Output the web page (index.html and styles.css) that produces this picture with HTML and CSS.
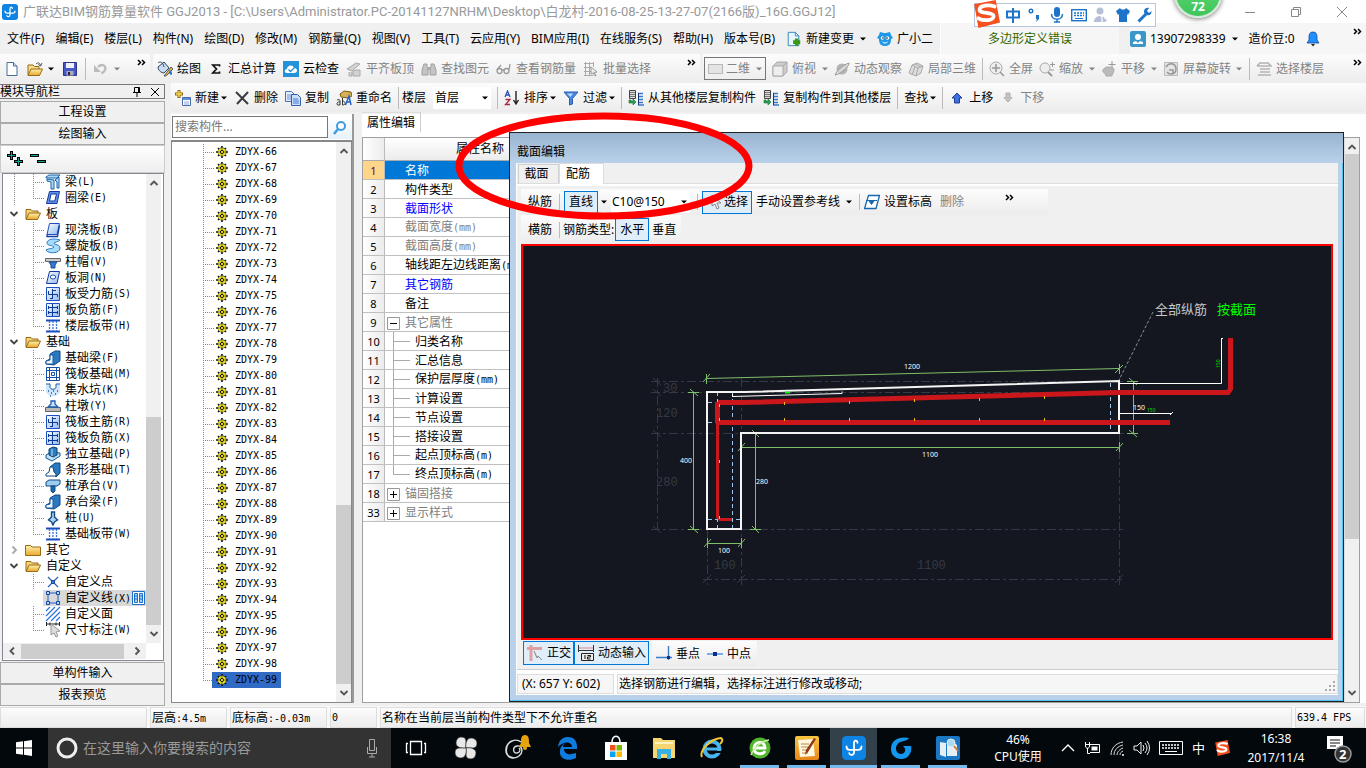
FILE: index.html
```html
<!DOCTYPE html>
<html lang="zh-CN">
<head>
<meta charset="utf-8">
<title>广联达BIM钢筋算量软件 GGJ2013</title>
<link rel="stylesheet" href="styles.css">
</head>
<body>
<svg class="defs" aria-hidden="true">
  <defs>
    <linearGradient id="gy" x1="0" y1="0" x2="0" y2="1"><stop offset="0" stop-color="#fff0b0"/><stop offset="1" stop-color="#e8a92c"/></linearGradient>
    <linearGradient id="gb" x1="0" y1="0" x2="1" y2="1"><stop offset="0" stop-color="#ffffff"/><stop offset="1" stop-color="#8fb8f0"/></linearGradient>
    <linearGradient id="go" x1="0" y1="0" x2="0" y2="1"><stop offset="0" stop-color="#f7c640"/><stop offset="1" stop-color="#e8851a"/></linearGradient>
    <symbol id="gear" viewBox="0 0 12 12"><path d="M6 0v12M0 6h12M2 2l8 8M10 2l-8 8" stroke="#111" stroke-width="1.600"/><circle cx="6" cy="6" r="4.300" fill="#e8e020" stroke="#222" stroke-width=".8" stroke-dasharray="2 1"/><path d="M6 2v8M2 6h8" stroke="#444" stroke-width=".6"/><circle cx="6" cy="6" r="1.600" fill="#fff200" stroke="#111"/></symbol>
    <symbol id="caret" viewBox="0 0 6 4"><path d="M0 .5h6L3 3.500z" fill="currentColor"/></symbol>
    <symbol id="more" viewBox="0 0 9 7"><path d="M1 1l2.500 2.500L1 6M5 1l2.500 2.500L5 6" fill="none" stroke="#000" stroke-width="1.500"/></symbol>
    <symbol id="chevd" viewBox="0 0 10 10"><path d="M1.500 3L5 6.500 8.500 3" fill="none" stroke="currentColor" stroke-width="1.900"/></symbol>
    <symbol id="chevu" viewBox="0 0 10 10"><path d="M1.500 7L5 3.500 8.500 7" fill="none" stroke="currentColor" stroke-width="1.900"/></symbol>
    <symbol id="chevl" viewBox="0 0 10 10"><path d="M7 1.500L3.500 5 7 8.500" fill="none" stroke="currentColor" stroke-width="1.900"/></symbol>
    <symbol id="chevr" viewBox="0 0 10 10"><path d="M3.500 1.500L7 5 3.500 8.500" fill="none" stroke="currentColor" stroke-width="1.900"/></symbol>
    <symbol id="ggj" viewBox="0 0 16 16"><rect width="16" height="16" rx="3" fill="#0d84e3"/><path d="M10.300 4.500c0-2-2.300-1.800-2.300.3V11c0 2-3 2-3.200.5M3 7c0 1.700.8 2.200 2 2.200h6c1.200 0 2-.5 2-2.200" fill="none" stroke="#fff" stroke-width="1.200" stroke-linecap="round"/></symbol>
    <symbol id="sogou" viewBox="0 0 26 26"><path d="M2 4L22 0l4 21-20 5z" fill="#f4511e"/><path d="M21 6c-5-2-14-1-14 3s13 2 13 6-9 5-14 2" fill="none" stroke="#fff" stroke-width="3.500" stroke-linecap="round"/></symbol>
    <symbol id="folder-open" viewBox="0 0 16 12"><path d="M1 11V1.500h5L7.500 3H13v2" fill="#f1d37c" stroke="#9a6a10"/><path d="M1 11.500L4 5h11.500l-3 6.500z" fill="url(#gy)" stroke="#9a6a10"/></symbol>
    <symbol id="folder" viewBox="0 0 16 12"><path d="M.5 11.500v-10h5L7 3h8.500v8.500z" fill="url(#gy)" stroke="#9a6a10"/></symbol>
    <symbol id="slab" viewBox="0 0 16 16"><path d="M4.500 1.500h10l-2.500 11H2z" fill="url(#gb)" stroke="#1c4fc0"/><path d="M2 12.500v2h10.500l2-11" fill="none" stroke="#1238a0" stroke-width="1.300"/></symbol>
    <symbol id="ringbeam" viewBox="0 0 16 16"><path d="M4.500 1.500h10l-2.500 12H1.500z" fill="#5f92e8" stroke="#1238a0"/><path d="M6 4h5.500L9.800 11H4.500z" fill="#fff" stroke="#1238a0"/></symbol>
    <symbol id="beam" viewBox="0 0 16 16"><path d="M1 3l3-2h11l-3 3H1zM2 5l7 1v9H6V8L2 7zM10 6l4-3v11h-2V8z" fill="#a9d8f5" stroke="#1f62a8"/></symbol>
    <symbol id="spiral" viewBox="0 0 16 16"><path d="M15 2C9 0 2 1 2 5c0 3 6 2 7 4-1 2-5 1-8 3 2 4 14 4 14-2 0-4-6-3-6-5 1-1 4-1 6-3z" fill="#a6dcfa" stroke="#2b7cc2"/></symbol>
    <symbol id="cap" viewBox="0 0 16 16"><path d="M.5 4.500h15v3H.5z" fill="#ccc" stroke="#666"/><path d="M4 8h8l-2 3v3H6v-3z" fill="#357bd0" stroke="#1a4a98"/></symbol>
    <symbol id="hole" viewBox="0 0 16 16"><path d="M4.500 1.500h10l-2.500 12H1.500z" fill="url(#gb)" stroke="#1238a0"/><ellipse cx="8" cy="7" rx="2.700" ry="2" fill="#fff" stroke="#1c4fc0"/></symbol>
    <symbol id="rebar-a" viewBox="0 0 16 16"><path d="M1.500 1.500h13v13h-13z" fill="url(#gb)" stroke="#1c4fc0"/><path d="M7.500 3v10M3.500 5v3.500h9V11M5 12.500h3M8 4.500h3" fill="none" stroke="#0d389a"/></symbol>
    <symbol id="rebar-b" viewBox="0 0 16 16"><path d="M1.500 1.500h13v13h-13z" fill="url(#gb)" stroke="#1c4fc0"/><path d="M7.500 2v12M3 5.500h10M3 10.500h10M3.500 4v3M12.500 4v3M3.500 9v3M12.500 9v3" stroke="#0d389a"/></symbol>
    <symbol id="band" viewBox="0 0 16 16"><path d="M1 2.500h14M1 13.500h14" stroke="#1c4fc0" stroke-width="2"/><path d="M8 3v10M4.500 3v10M11.500 3v10" stroke="#3a78d8" stroke-width="1.300" stroke-dasharray="2 1"/></symbol>
    <symbol id="fbeam" viewBox="0 0 16 16"><path d="M1 14V11l4-2V4l5-3h5v10l-6 4z" fill="#2a78c2" stroke="#124a80"/><path d="M1 14v-3l4-1V5h3v9z" fill="#eaf5ff" stroke="#1a5aa0"/></symbol>
    <symbol id="raft" viewBox="0 0 16 16"><path d="M1.500 1.500h13v13h-13zM4.500 1v14M11.500 1v14M1 4.500h14M1 11.500h14M6.500 6.500h3v3h-3z" fill="#fff" fill-opacity=".2" stroke="#1750a8"/></symbol>
    <symbol id="pit" viewBox="0 0 16 16"><path d="M1 2h4v3c0 3 6 3 6 0V2h4v6c0 8-14 8-14 0z" fill="#cfe5fb"/><path d="M1 2h4v3c0 3 6 3 6 0V2h4" fill="none" stroke="#1c5fb0"/><path d="M3 9h1M6 11h1M10 12h1M12 9h1M8 9h1M5 14h1" stroke="#1c5fb0" stroke-width="1.400"/></symbol>
    <symbol id="pier" viewBox="0 0 16 16"><path d="M.5 9.500h15v4H.5z" fill="#bbb" stroke="#666"/><path d="M3 9l3-3V3h4v3l3 3z" fill="#cfe1fb" stroke="#1c5fb0" stroke-width="1.300"/></symbol>
    <symbol id="isolated" viewBox="0 0 16 16"><path d="M1 9l5-3 9 1v3l-8 5-6-3z" fill="#bfe0f8" stroke="#15558c"/><path d="M4 3l4-2 4 1v7l-4 2-4-2z" fill="#2d7cbe" stroke="#0d4474"/><path d="M7 3v7" stroke="#bfe0f8"/></symbol>
    <symbol id="strip" viewBox="0 0 16 16"><path d="M5 5l5-4h5v10l-4 4z" fill="#2a78c2" stroke="#124a80"/><path d="M1 14v-2l3-2 1-5h3l1 5 2 2v2z" fill="#fff" stroke="#124a80"/></symbol>
    <symbol id="pilecap" viewBox="0 0 16 16"><path d="M1 4l3-2h11v4l-3 2H1z" fill="#9bcdf2" stroke="#124a80"/><path d="M6 8h4v5l-2 2-2-2z" fill="#176bb5" stroke="#124a80"/></symbol>
    <symbol id="pile" viewBox="0 0 16 16"><path d="M6.500 2h3v5l3 3-3 2L8 15l-1.500-3-3-2 3-3z" fill="#a8d2f5" stroke="#124a80" stroke-width="1.400"/></symbol>
    <symbol id="cpoint" viewBox="0 0 16 16"><path d="M3 3l10 10M13 3L3 13" stroke="#2463ba" stroke-width="1.200"/><path d="M6.500 6.500h3v3h-3z" fill="#3b80dd" stroke="#1a4a98"/></symbol>
    <symbol id="cline" viewBox="0 0 16 16"><path d="M3 3h10v10H3z" fill="none" stroke="#1c5fd0"/><path d="M1.500 1.500h3v3h-3zM11.500 1.500h3v3h-3zM1.500 11.500h3v3h-3zM11.500 11.500h3v3h-3z" fill="#bcd8fa" stroke="#1246a0"/></symbol>
    <symbol id="cface" viewBox="0 0 16 16"><path d="M1 5l4-4M1 10l9-9M1 15L15 1M6 15l9-9M11 15l4-4" stroke="#2d73dc" stroke-width="1.200"/></symbol>
    <symbol id="dim" viewBox="0 0 16 16"><path d="M1.500 0v4M14.500 0v4M2 2h12M5 .5v3M11 .5v3" stroke="#222"/><path d="M6 2l9 7-4 1 2 4-2 1-2-4-3 2z" fill="#ddd" stroke="#999"/></symbol>
    <symbol id="i-new" viewBox="0 0 16 16"><path d="M3 1.500h6.500l3.500 3.500v9.500H3z" fill="#fff" stroke="#4a6a9a"/><path d="M9.500 1.500V5H13" fill="#cfe0f5" stroke="#4a6a9a"/></symbol>
    <symbol id="i-open" viewBox="0 0 16 16"><path d="M1 14V4h5l1.500 1.500H12V8" fill="#f6dc8e" stroke="#9a6a10"/><path d="M1 14.500L4 8h11.500l-3 6.500z" fill="url(#gy)" stroke="#9a6a10"/><path d="M9 3c2-2 4-1 4.500 1.500M15 2l-1.300 3-2.400-1.500" fill="none" stroke="#456"/></symbol>
    <symbol id="i-save" viewBox="0 0 16 16"><path d="M1.500 1.500h13v13h-13z" fill="#4757c8" stroke="#2c3488"/><path d="M4 2h8v5H4z" fill="#eef2ff"/><path d="M4.500 10h7v4.500h-7z" fill="#aab"/><path d="M6 11h2v3H6z" fill="#223"/></symbol>
    <symbol id="i-undo" viewBox="0 0 16 16"><path d="M5 6c4-4 9-1 7 3-.7 1.500-2 2.500-3.500 3.500" fill="none" stroke="#bbb" stroke-width="2.400"/><path d="M1 4v7h7z" fill="#bbb"/></symbol>
    <symbol id="i-paint" viewBox="0 0 16 16"><path d="M1 6l6-5 5 6-5 5c-3 0-6-3-6-6z" fill="#c9dcf5" stroke="#345"/><path d="M1 2c2-2 5-1 6 4" fill="none" stroke="#345"/><path d="M7 15l7-9 2 2-7 7z" fill="#e7b63c" stroke="#345" stroke-width=".8"/><path d="M13 9c3 2 2 5 1 5s-3-3-1-5z" fill="#2a6fd8"/></symbol>
    <symbol id="i-sigma" viewBox="0 0 16 16"><path d="M11.500 5.500V4H4.800L8.500 8l-3.700 4h6.700v-1.500" fill="none" stroke="#111" stroke-width="1.700"/></symbol>
    <symbol id="i-cloud" viewBox="0 0 16 16"><rect width="16" height="16" fill="#2492d8"/><path d="M4 12c-3 0-3-4 0-4 0-4 6-5 7-1 4 0 4 5 0 5z" fill="#fff"/><path d="M5.500 8.500L7.500 10.500 13 5" fill="none" stroke="#2492d8" stroke-width="1.300"/></symbol>
    <symbol id="i-align" viewBox="0 0 16 16"><path d="M1 8l9-6 4 1-8 7zM3 11v4h3v-4M7 10v5h7V9h-4z" fill="#d2d2d2" stroke="#aaa"/></symbol>
    <symbol id="i-bino" viewBox="0 0 16 16"><path d="M3 3h3v3l1 1v7H1V9zM10 3h3l2 6v5H9V7l1-1z" fill="#c4c4c4" stroke="#a0a0a0"/><path d="M6.500 6h3v3h-3z" fill="#aaa"/></symbol>
    <symbol id="i-glass" viewBox="0 0 16 16"><circle cx="3.500" cy="10" r="2.500" fill="none" stroke="#999" stroke-width="1.300"/><circle cx="10.500" cy="10" r="2.500" fill="none" stroke="#999" stroke-width="1.300"/><path d="M6 9h2M1 9l4-5M13 9l1-6" stroke="#999" stroke-width="1.300" fill="none"/></symbol>
    <symbol id="i-grid" viewBox="0 0 16 16"><path d="M1 2.500h10M1 6.500h8M1 10.500h7M1 14.500h9M2.500 1v14M6.500 1v14M10.500 1v5" stroke="#aaa"/><path d="M8 6l6 5-3 .5 2 3-1 .5-2-3-2 1z" fill="#eee" stroke="#999"/></symbol>
    <symbol id="i-rect" viewBox="0 0 16 16"><rect x=".5" y="3.500" width="14" height="9" fill="#e3e3e3" stroke="#b8b8b8"/></symbol>
    <symbol id="i-cube" viewBox="0 0 16 16"><path d="M1 5l4-4h10v10l-4 4H1z" fill="#ccc" stroke="#aaa"/><path d="M1 5h10v10H1z" fill="#eee" stroke="#aaa"/><path d="M11 5l4-4" stroke="#aaa"/></symbol>
    <symbol id="i-orbit" viewBox="0 0 16 16"><circle cx="8" cy="8" r="5.500" fill="#b4b4b4"/><path d="M1 14C3 9 9 4 15 2c1 2-7 11-14 12z" fill="#ddd" fill-opacity=".8" stroke="#999"/></symbol>
    <symbol id="i-local" viewBox="0 0 16 16"><path d="M4 4l5-2 6 3-2 7-5 3-7-3z" fill="#ddd" stroke="#aaa"/><path d="M4 4l6 3 5-2M10 7l-2 8M7 5.500L4 14M7 3l6 3" fill="none" stroke="#aaa"/></symbol>
    <symbol id="i-fit" viewBox="0 0 16 16"><circle cx="7" cy="7" r="6" fill="#eee" stroke="#aaa"/><path d="M7 3v8M3 7h8M11 11l4 4" stroke="#999" stroke-width="1.600"/></symbol>
    <symbol id="i-zoom" viewBox="0 0 16 16"><circle cx="6" cy="7" r="5" fill="#eee" stroke="#aaa"/><path d="M9 11l4 4" stroke="#999" stroke-width="2"/><path d="M13.500 1v5M11 3.500h5M11 9h4" stroke="#999"/></symbol>
    <symbol id="i-pan" viewBox="0 0 16 16"><path d="M2 9c2-3 3-3 5-3s6 0 6 3-2 3-2 6H5c0-3-4-3-3-6z" fill="#bbb" stroke="#aaa"/><path d="M11 0v7M7.500 3.500h7" stroke="#999"/></symbol>
    <symbol id="i-rot" viewBox="0 0 16 16"><path d="M1.500 1.500h13v13h-13z" fill="#e5e5e5" stroke="#bbb"/><path d="M3 6c3-5 10-4 10 2s-7 6-9 3" fill="none" stroke="#999" stroke-width="1.600"/><path d="M6 9h4v3" fill="none" stroke="#999" stroke-width="1.500"/></symbol>
    <symbol id="i-floors" viewBox="0 0 16 16"><path d="M1 5l3-3h8l3 3H1M4 8h10M4 11h10M2 14h13" fill="none" stroke="#b4b4b4" stroke-width="1.700"/></symbol>
    <symbol id="i-add" viewBox="0 0 16 16"><path d="M4 0v8M0 4h8" stroke="#8a6a10" stroke-width="3"/><path d="M4 1v6M1 4h6" stroke="#ffd848" stroke-width="1.400"/><path d="M7.500 7.500h8v8h-8z" fill="#fff" stroke="#4a6aa8"/><path d="M8 8h7v2H8z" fill="#5b8fe0"/><path d="M9 12h5M9 14h5" stroke="#8aa6d8"/></symbol>
    <symbol id="i-x" viewBox="0 0 16 16"><path d="M2 2l12 12M14 2L3 14" stroke="#3c3c44" stroke-width="2"/></symbol>
    <symbol id="i-copy" viewBox="0 0 16 16"><path d="M.5 1.500h6l3 3v7h-9z" fill="#e4eefc" stroke="#4a70b8"/><path d="M2 5h5M2 7h5M2 9h5" stroke="#6a90d8"/><path d="M6.500 4.500h6l3 3v8h-9z" fill="#cadffa" stroke="#3560b0"/><path d="M8 9h5M8 11h6M8 13h6" stroke="#4a78d0"/></symbol>
    <symbol id="i-ren" viewBox="0 0 16 16"><path d="M4 4l4-3 7 1 1 4-4 2-7-1z" fill="#d8b252" stroke="#7a5a18"/><path d="M1 10c3-1 3 0 3 2v3M4 12c-3-1-4 3-2 3h2M6.500 8v7c4 0 3-4 0-4" fill="none" stroke="#333"/><path d="M9.500 15L13 6l2 9M11 12h4" fill="none" stroke="#2463c8" stroke-width="1.500"/></symbol>
    <symbol id="i-az" viewBox="0 0 16 16"><path d="M1 7l2.500-6L6 7M2 5h3" fill="none" stroke="#2d50b0" stroke-width="1.300"/><path d="M1.500 9.500H6l-4.500 5H6" fill="none" stroke="#a82a40" stroke-width="1.300"/><path d="M12 1v12M9.500 10l2.500 4 2.500-4" fill="none" stroke="#222" stroke-width="1.400"/></symbol>
    <symbol id="i-fun" viewBox="0 0 16 16"><path d="M1 2h14L9.500 8.500V14L6.500 15V8.500z" fill="#4a88e0" stroke="#2a5cae"/><path d="M4 3.500h6L7.500 7z" fill="#b8d8ff"/></symbol>
    <symbol id="i-cpfloor" viewBox="0 0 16 16"><path d="M1.500.5h6v8h-6z" fill="#ddd" stroke="#444"/><path d="M2 2.500h5M2 4.500h5M2 6.500h5" stroke="#777"/><path d="M1 10v3h4v2l3-3-3-3v2H3v-1z" fill="#27a050" stroke="#187038" stroke-width=".6"/><path d="M10 3.500h5M10 6.500h5M10 9.500h5M10 12.500h5M10 15h6" stroke="#3a78cc" stroke-width="1.600"/><path d="M10.500 3v12" stroke="#17396f"/></symbol>
    <symbol id="i-up" viewBox="0 0 16 16"><path d="M8 3l5 5h-2.500v5h-5V8H3z" fill="#3d70dc" stroke="#1c3f98"/></symbol>
    <symbol id="i-down" viewBox="0 0 16 16"><path d="M8 12l4-4.500h-2V3H6v4.500H4z" fill="#c2c2c2" stroke="#b0b0b0"/></symbol>
    <symbol id="i-doc" viewBox="0 0 16 18"><path d="M1.500 1.500h8l4 4v11h-12z" fill="#e7f5ff" stroke="#2a80b8"/><path d="M9.500 1.500v4h4" fill="none" stroke="#2a80b8"/><path d="M11 8.500v8M7 12.500h8" stroke="#3a9a18" stroke-width="4"/></symbol>
    <symbol id="i-face" viewBox="0 0 16 16"><path d="M2 4l1-3 4 1h2l4-1 1 3 2 3-2 1c0 5-2 7-6 7s-6-2-6-7L0 7z" fill="#1e98e8"/><circle cx="5.500" cy="7" r="1.800" fill="#fff"/><circle cx="10.500" cy="7" r="1.800" fill="#fff"/><circle cx="6" cy="7" r=".8"/><circle cx="10" cy="7" r=".8"/><path d="M5.500 11c2 1.500 3 1.500 5 0" stroke="#fff" fill="none"/></symbol>
    <symbol id="i-user" viewBox="0 0 16 16"><rect width="16" height="16" rx="2" fill="#3b97c8"/><circle cx="8" cy="6" r="3" fill="#fff"/><path d="M3 13v-2l3-1 2 2 2-2 3 1v2z" fill="#fff"/></symbol>
    <symbol id="i-bell" viewBox="0 0 14 16"><path d="M7 1c-3 0-4 2-4 5v3l-2 3h12l-2-3V6c0-3-1-5-4-5z" fill="#1e90ff" stroke="#174a90" stroke-width=".8"/><path d="M5 13h4l-2 2.500z" fill="#222"/></symbol>
    <symbol id="i-cursor" viewBox="0 0 16 16"><path d="M4 1v11l3-2 2 5 2-1-2-5h4z" fill="#f4f4f4" stroke="#888"/></symbol>
    <symbol id="i-elev" viewBox="0 0 16 16"><path d="M4.500 1.500h11l-3.500 13H.500z" fill="#fff" stroke="#1767b0" stroke-width="1.300"/><path d="M2 6.500h11M5 7h5l-2.500 3.500z" fill="#1767b0" stroke="#1767b0"/></symbol>
    <symbol id="i-ortho" viewBox="0 0 16 16"><path d="M0 3.500h15M4 0v16" stroke="#dfa0a0" stroke-width="3"/><path d="M7 6l3 7 1-2 4 4" fill="#ddd" stroke="#888"/></symbol>
    <symbol id="i-dyn" viewBox="0 0 16 16"><path d="M.5 0v7M15.500 0v7M1 5.500h14" stroke="#333" fill="none"/><path d="M1 3h14" stroke="#d88"/><path d="M3.500 8.500h12v7h-12z" fill="#eee" stroke="#222"/><path d="M7 10v4M9.500 10.500h3v1.500h-3v2h3" fill="none" stroke="#111"/></symbol>
    <symbol id="i-perp" viewBox="0 0 16 16"><path d="M0 11.500h16M12.500 0v14" stroke="#3b7bc8" stroke-width="1.400"/><path d="M11 10h3v3h-3z" fill="#0a2f88"/></symbol>
    <symbol id="i-mid" viewBox="0 0 16 16"><path d="M0 8h16" stroke="#5b9be0" stroke-width="1.600"/><path d="M6 6h4v4H6z" fill="#0a2f88"/></symbol>
    <symbol id="t-ie" viewBox="0 0 24 24"><circle cx="12" cy="13" r="7.500" fill="none" stroke="#49b4ee" stroke-width="4"/><path d="M6 13h14" fill="none" stroke="#49b4ee" stroke-width="3"/><path d="M14 16h9" stroke="#03080c" stroke-width="2"/><path d="M2 21C-1 15 10 3 21 2c3 2 0 5-1 6" fill="none" stroke="#f3c734" stroke-width="2"/></symbol>
  </defs>
</svg>

<header class="titlebar">
  <svg class="ic"><use href="#ggj"/></svg>
  <h1>广联达BIM钢筋算量软件 GGJ2013 - [C:\Users\Administrator.PC-20141127NRHM\Desktop\白龙村-2016-08-25-13-27-07(2166版)_16G.GGJ12]</h1>
  <div class="wincontrols">
    <button aria-label="最小化"><svg width="12" height="12"><path d="M1 6.500h10" stroke="#888"/></svg></button>
    <button aria-label="还原"><svg width="12" height="12"><path d="M1.500 3.500h7v7h-7zM3.500 3.500v-2h7v7h-2" fill="none" stroke="#888"/></svg></button>
    <button aria-label="关闭"><svg width="12" height="12"><path d="M1 1l10 10M11 1L1 11" stroke="#888"/></svg></button>
  </div>
</header>

<nav class="menubar">
  <button>文件(F)</button><button>编辑(E)</button><button>楼层(L)</button><button>构件(N)</button><button>绘图(D)</button><button>修改(M)</button><button>钢筋量(Q)</button><button>视图(V)</button><button>工具(T)</button><button>云应用(Y)</button><button>BIM应用(I)</button><button>在线服务(S)</button><button>帮助(H)</button><button>版本号(B)</button>
  <button class="tool"><svg class="ic"><use href="#i-doc"/></svg>新建变更<svg class="caret wide"><use href="#caret"/></svg></button>
  <button class="tool helper"><svg class="ic"><use href="#i-face"/></svg>广小二</button>
  <div class="notice">多边形定义错误</div>
  <div class="account">
    <button class="tool"><svg class="ic"><use href="#i-user"/></svg><span class="phone">13907298339</span><svg class="caret wide"><use href="#caret"/></svg></button>
    <span>造价豆:0</span>
    <button aria-label="通知"><svg class="ic"><use href="#i-bell"/></svg></button>
    <button class="more" aria-label="更多"><svg><use href="#more"/></svg></button>
  </div>
</nav>

<div class="toolbars">
  <div class="bar bar-file">
    <button aria-label="新建"><svg class="ic"><use href="#i-new"/></svg></button>
    <button class="tool" aria-label="打开"><svg class="ic"><use href="#i-open"/></svg><svg class="caret"><use href="#caret"/></svg></button>
    <button aria-label="保存"><svg class="ic"><use href="#i-save"/></svg></button>
    <i class="sep"></i>
    <button class="tool off" aria-label="撤销"><svg class="ic"><use href="#i-undo"/></svg><svg class="caret"><use href="#caret"/></svg></button>
    <button class="more" aria-label="更多"><svg><use href="#more"/></svg></button>
  </div>
  <div class="bar bar-draw">
    <button class="tool"><svg class="ic"><use href="#i-paint"/></svg>绘图</button>
    <button class="tool"><svg class="ic"><use href="#i-sigma"/></svg>汇总计算</button>
    <button class="tool"><svg class="ic"><use href="#i-cloud"/></svg>云检查</button>
    <button class="tool off"><svg class="ic"><use href="#i-align"/></svg>平齐板顶</button>
    <button class="tool off"><svg class="ic"><use href="#i-bino"/></svg>查找图元</button>
    <button class="tool off"><svg class="ic"><use href="#i-glass"/></svg>查看钢筋量</button>
    <button class="tool off"><svg class="ic"><use href="#i-grid"/></svg>批量选择</button>
    <button class="more" aria-label="更多"><svg><use href="#more"/></svg></button>
  </div>
  <div class="bar bar-view">
    <label class="dimsel off"><svg class="ic"><use href="#i-rect"/></svg><select aria-label="视图维度"><option>二维</option></select><svg class="caret"><use href="#caret"/></svg></label>
    <button class="tool off"><svg class="ic"><use href="#i-cube"/></svg>俯视<svg class="caret wide"><use href="#caret"/></svg></button>
    <button class="tool off"><svg class="ic"><use href="#i-orbit"/></svg>动态观察</button>
    <button class="tool off"><svg class="ic"><use href="#i-local"/></svg>局部三维</button>
    <i class="sep"></i>
    <button class="tool off"><svg class="ic"><use href="#i-fit"/></svg>全屏</button>
    <button class="tool off"><svg class="ic"><use href="#i-zoom"/></svg>缩放<svg class="caret wide"><use href="#caret"/></svg></button>
    <button class="tool off"><svg class="ic"><use href="#i-pan"/></svg>平移<svg class="caret wide"><use href="#caret"/></svg></button>
    <button class="tool off"><svg class="ic"><use href="#i-rot"/></svg>屏幕旋转<svg class="caret"><use href="#caret"/></svg></button>
    <i class="sep"></i>
    <button class="tool off"><svg class="ic"><use href="#i-floors"/></svg>选择楼层</button>
    <button class="more" aria-label="更多"><svg><use href="#more"/></svg></button>
  </div>
</div>

<div class="workspace">
  <aside class="nav">
    <div class="nav-head"><span>模块导航栏</span>
      <button aria-label="固定"><svg width="10" height="12"><path d="M2.500 1.500h5v5h-5zM1 6.500h8M5 7v4M6.500 2v4" fill="none" stroke="#000"/></svg></button>
      <button aria-label="关闭"><svg width="10" height="12"><path d="M1 2l8 8M9 2L1 10" stroke="#000"/></svg></button>
    </div>
    <button class="nav-tab">工程设置</button>
    <button class="nav-tab">绘图输入</button>
    <div class="nav-tools">
      <button aria-label="全部展开"><svg width="17" height="16"><path d="M4.500 0v9M0 4.500h9M11.500 6v9M7 10.500h9" stroke="#000" stroke-width="3"/><path d="M4.500 1v7M1 4.500h7M11.500 7v7M8 10.500h7" stroke="#1aa090"/></svg></button>
      <button aria-label="全部折叠"><svg width="17" height="16"><path d="M0 4.500h9M7 10.500h9" stroke="#000" stroke-width="3"/><path d="M1 4.500h7M8 10.500h7" stroke="#1aa090"/></svg></button>
    </div>
    <div class="tree">
      <ul class="tree-list">
        <li class="leaf on"><svg class="ic"><use href="#beam"/></svg>梁<span class="m">(L)</span></li>
        <li class="leaf on last"><svg class="ic"><use href="#ringbeam"/></svg>圈梁<span class="m">(E)</span></li>
        <li class="root"><svg class="ch"><use href="#chevd"/></svg><svg class="fd"><use href="#folder-open"/></svg>板</li>
        <li class="leaf on"><svg class="ic"><use href="#slab"/></svg>现浇板<span class="m">(B)</span></li>
        <li class="leaf on"><svg class="ic"><use href="#spiral"/></svg>螺旋板<span class="m">(B)</span></li>
        <li class="leaf on"><svg class="ic"><use href="#cap"/></svg>柱帽<span class="m">(V)</span></li>
        <li class="leaf on"><svg class="ic"><use href="#hole"/></svg>板洞<span class="m">(N)</span></li>
        <li class="leaf on"><svg class="ic"><use href="#rebar-a"/></svg>板受力筋<span class="m">(S)</span></li>
        <li class="leaf on"><svg class="ic"><use href="#rebar-b"/></svg>板负筋<span class="m">(F)</span></li>
        <li class="leaf on last"><svg class="ic"><use href="#band"/></svg>楼层板带<span class="m">(H)</span></li>
        <li class="root"><svg class="ch"><use href="#chevd"/></svg><svg class="fd"><use href="#folder-open"/></svg>基础</li>
        <li class="leaf on"><svg class="ic"><use href="#fbeam"/></svg>基础梁<span class="m">(F)</span></li>
        <li class="leaf on"><svg class="ic"><use href="#raft"/></svg>筏板基础<span class="m">(M)</span></li>
        <li class="leaf on"><svg class="ic"><use href="#pit"/></svg>集水坑<span class="m">(K)</span></li>
        <li class="leaf on"><svg class="ic"><use href="#pier"/></svg>柱墩<span class="m">(Y)</span></li>
        <li class="leaf on"><svg class="ic"><use href="#rebar-a"/></svg>筏板主筋<span class="m">(R)</span></li>
        <li class="leaf on"><svg class="ic"><use href="#rebar-b"/></svg>筏板负筋<span class="m">(X)</span></li>
        <li class="leaf on"><svg class="ic"><use href="#isolated"/></svg>独立基础<span class="m">(P)</span></li>
        <li class="leaf on"><svg class="ic"><use href="#strip"/></svg>条形基础<span class="m">(T)</span></li>
        <li class="leaf on"><svg class="ic"><use href="#pilecap"/></svg>桩承台<span class="m">(V)</span></li>
        <li class="leaf on"><svg class="ic"><use href="#fbeam"/></svg>承台梁<span class="m">(F)</span></li>
        <li class="leaf on"><svg class="ic"><use href="#pile"/></svg>桩<span class="m">(U)</span></li>
        <li class="leaf on last"><svg class="ic"><use href="#band"/></svg>基础板带<span class="m">(W)</span></li>
        <li class="root"><svg class="ch dim"><use href="#chevr"/></svg><svg class="fd"><use href="#folder"/></svg>其它</li>
        <li class="root"><svg class="ch"><use href="#chevd"/></svg><svg class="fd"><use href="#folder-open"/></svg>自定义</li>
        <li class="leaf"><svg class="ic"><use href="#cpoint"/></svg>自定义点</li>
        <li class="leaf picked"><svg class="ic"><use href="#cline"/></svg><span>自定义线<span class="m">(X)</span></span><svg class="book" width="13" height="14"><path d="M.5.500h12v13H.500z" fill="#fff" stroke="#1c6fc8"/><path d="M2.500 2.500h3v9h-3zM7.500 2.500h3v9h-3z" fill="#a8d4fa" stroke="#1c6fc8"/><path d="M3 5h2M3 8h2M8 5h2M8 8h2" stroke="#1c6fc8"/></svg></li>
        <li class="leaf"><svg class="ic"><use href="#cface"/></svg>自定义面</li>
        <li class="leaf last"><svg class="ic"><use href="#dim"/></svg>尺寸标注<span class="m">(W)</span></li>
      </ul>
      <div class="vscroll"><svg><use href="#chevu"/></svg><b class="thumb-nav"></b><svg><use href="#chevd"/></svg></div>
      <div class="hscroll"><svg><use href="#chevl"/></svg><b></b><svg><use href="#chevr"/></svg></div>
    </div>
    <button class="nav-tab">单构件输入</button>
    <button class="nav-tab">报表预览</button>
  </aside>

  <main class="main">
    <div class="bar bar-part">
      <button class="tool tight"><svg class="ic"><use href="#i-add"/></svg>新建<svg class="caret"><use href="#caret"/></svg></button>
      <button class="tool"><svg class="ic"><use href="#i-x"/></svg>删除</button>
      <button class="tool"><svg class="ic"><use href="#i-copy"/></svg>复制</button>
      <button class="tool"><svg class="ic"><use href="#i-ren"/></svg>重命名</button>
      <i class="sep"></i>
      <label class="floor">楼层<span class="combo"><select><option>首层</option></select><svg class="caret"><use href="#caret"/></svg></span></label>
      <i class="sep"></i>
      <button class="tool tight"><svg class="ic"><use href="#i-az"/></svg>排序<svg class="caret"><use href="#caret"/></svg></button>
      <button class="tool tight"><svg class="ic"><use href="#i-fun"/></svg>过滤<svg class="caret"><use href="#caret"/></svg></button>
      <i class="sep"></i>
      <button class="tool"><svg class="ic"><use href="#i-cpfloor"/></svg>从其他楼层复制构件</button>
      <button class="tool"><svg class="ic"><use href="#i-cpfloor"/></svg>复制构件到其他楼层</button>
      <i class="sep"></i>
      <button class="tool tight">查找<svg class="caret"><use href="#caret"/></svg></button>
      <i class="sep"></i>
      <button class="tool"><svg class="ic"><use href="#i-up"/></svg>上移</button>
      <button class="tool off"><svg class="ic"><use href="#i-down"/></svg>下移</button>
    </div>

    <div class="panes">
      <section class="parts">
        <form class="search"><input type="text" placeholder="搜索构件..." aria-label="搜索构件"><button type="button" aria-label="搜索"><svg width="16" height="16"><circle cx="9" cy="6" r="4" fill="#fff" stroke="#3a9ee0" stroke-width="2"/><path d="M6 9l-4 5" stroke="#3a9ee0" stroke-width="2.500"/></svg></button></form>
        <div class="parts-body">
          <ul>
            <li><svg><use href="#gear"/></svg><span>ZDYX-66</span></li><li><svg><use href="#gear"/></svg><span>ZDYX-67</span></li><li><svg><use href="#gear"/></svg><span>ZDYX-68</span></li><li><svg><use href="#gear"/></svg><span>ZDYX-69</span></li>
            <li><svg><use href="#gear"/></svg><span>ZDYX-70</span></li><li><svg><use href="#gear"/></svg><span>ZDYX-71</span></li><li><svg><use href="#gear"/></svg><span>ZDYX-72</span></li><li><svg><use href="#gear"/></svg><span>ZDYX-73</span></li><li><svg><use href="#gear"/></svg><span>ZDYX-74</span></li>
            <li><svg><use href="#gear"/></svg><span>ZDYX-75</span></li><li><svg><use href="#gear"/></svg><span>ZDYX-76</span></li><li><svg><use href="#gear"/></svg><span>ZDYX-77</span></li><li><svg><use href="#gear"/></svg><span>ZDYX-78</span></li><li><svg><use href="#gear"/></svg><span>ZDYX-79</span></li>
            <li><svg><use href="#gear"/></svg><span>ZDYX-80</span></li><li><svg><use href="#gear"/></svg><span>ZDYX-81</span></li><li><svg><use href="#gear"/></svg><span>ZDYX-82</span></li><li><svg><use href="#gear"/></svg><span>ZDYX-83</span></li><li><svg><use href="#gear"/></svg><span>ZDYX-84</span></li>
            <li><svg><use href="#gear"/></svg><span>ZDYX-85</span></li><li><svg><use href="#gear"/></svg><span>ZDYX-86</span></li><li><svg><use href="#gear"/></svg><span>ZDYX-87</span></li><li><svg><use href="#gear"/></svg><span>ZDYX-88</span></li><li><svg><use href="#gear"/></svg><span>ZDYX-89</span></li>
            <li><svg><use href="#gear"/></svg><span>ZDYX-90</span></li><li><svg><use href="#gear"/></svg><span>ZDYX-91</span></li><li><svg><use href="#gear"/></svg><span>ZDYX-92</span></li><li><svg><use href="#gear"/></svg><span>ZDYX-93</span></li><li><svg><use href="#gear"/></svg><span>ZDYX-94</span></li>
            <li><svg><use href="#gear"/></svg><span>ZDYX-95</span></li><li><svg><use href="#gear"/></svg><span>ZDYX-96</span></li><li><svg><use href="#gear"/></svg><span>ZDYX-97</span></li><li><svg><use href="#gear"/></svg><span>ZDYX-98</span></li>
            <li class="current"><span class="hit"><svg><use href="#gear"/></svg><span>ZDYX-99</span></span></li>
          </ul>
          <div class="vscroll"><svg><use href="#chevu"/></svg><b class="thumb-parts"></b><svg><use href="#chevd"/></svg></div>
        </div>
      </section>

      <section class="props">
        <div class="props-tabs"><button>属性编辑</button></div>
        <div class="props-body">
          <table>
            <thead><tr><th></th><th>属性名称</th><th></th></tr></thead>
            <tbody>
              <tr class="sel"><td>1</td><td>名称</td><td></td></tr>
              <tr><td>2</td><td>构件类型</td><td></td></tr>
              <tr class="blue"><td>3</td><td>截面形状</td><td></td></tr>
              <tr class="gray"><td>4</td><td>截面宽度<span class="m">(mm)</span></td><td></td></tr>
              <tr class="gray"><td>5</td><td>截面高度<span class="m">(mm)</span></td><td></td></tr>
              <tr><td>6</td><td>轴线距左边线距离<span class="m">(mm)</span></td><td></td></tr>
              <tr class="blue"><td>7</td><td>其它钢筋</td><td></td></tr>
              <tr><td>8</td><td>备注</td><td></td></tr>
              <tr class="gray group"><td>9</td><td><button aria-label="折叠"><svg width="13" height="13"><path d="M.5.500h12v12H.500z" fill="#fff" stroke="#999"/><path d="M3 6.500h7" stroke="#000"/></svg></button>其它属性</td><td></td></tr>
              <tr class="child"><td>10</td><td>归类名称</td><td></td></tr>
              <tr class="child"><td>11</td><td>汇总信息</td><td></td></tr>
              <tr class="child"><td>12</td><td>保护层厚度<span class="m">(mm)</span></td><td></td></tr>
              <tr class="child"><td>13</td><td>计算设置</td><td></td></tr>
              <tr class="child"><td>14</td><td>节点设置</td><td></td></tr>
              <tr class="child"><td>15</td><td>搭接设置</td><td></td></tr>
              <tr class="child"><td>16</td><td>起点顶标高<span class="m">(m)</span></td><td></td></tr>
              <tr class="child end"><td>17</td><td>终点顶标高<span class="m">(m)</span></td><td></td></tr>
              <tr class="gray group"><td>18</td><td><button aria-label="展开"><svg width="13" height="13"><path d="M.5.500h12v12H.500z" fill="#fff" stroke="#999"/><path d="M3 6.500h7M6.500 3v7" stroke="#000"/></svg></button>锚固搭接</td><td></td></tr>
              <tr class="gray group"><td>33</td><td><button aria-label="展开"><svg width="13" height="13"><path d="M.5.500h12v12H.500z" fill="#fff" stroke="#999"/><path d="M3 6.500h7M6.500 3v7" stroke="#000"/></svg></button>显示样式</td><td></td></tr>
            </tbody>
          </table>
          <div class="vscroll"><svg><use href="#chevu"/></svg><b class="thumb-props"></b><svg><use href="#chevd"/></svg></div>
        </div>
      </section>
    </div>
  </main>

  <section class="dialog" role="dialog" aria-label="截面编辑">
    <h2>截面编辑</h2>
    <div class="dlg-body">
      <div class="dlg-tabs"><button>截面</button><button class="active">配筋</button></div>
      <div class="dlg-content">
        <div class="bar strip-a">
          <button>纵筋</button><i class="sep"></i>
          <button class="pressed">直线</button><svg class="caret"><use href="#caret"/></svg>
          <span class="combo"><select aria-label="钢筋规格"><option>C10@150</option></select><svg class="caret"><use href="#caret"/></svg></span>
          <i class="sep"></i>
          <button class="pressed pick"><svg class="ic"><use href="#i-cursor"/></svg>选择</button>
          <button class="tool">手动设置参考线<svg class="caret wide"><use href="#caret"/></svg></button>
          <i class="sep"></i>
          <button class="tool"><svg class="ic"><use href="#i-elev"/></svg>设置标高</button>
          <button class="off del">删除</button>
          <button class="more" aria-label="更多"><svg><use href="#more"/></svg></button>
        </div>
        <div class="bar strip-b">
          <button>横筋</button><i class="sep"></i><span>钢筋类型:</span>
          <button class="pressed">水平</button><button>垂直</button>
        </div>
        <div class="canvas">
          <svg role="img" aria-label="截面配筋图"><g transform="translate(-523 -246)" fill="none">
            <g stroke="#343a45">
              <path d="M651 381.500H1123M651 392.500H1118M651 433.500H741M1119 433.500H1124M651 529.500H1123M703 579.500H1122" stroke-dasharray="9 3 3 3"/>
              <path d="M657.500 378V529M707.500 529V585M741.500 378V585M1119.500 378V585" stroke-dasharray="9 3 3 3"/>
              <path d="M653 378l8 7M653 389l8 7M653 430l8 7M653 526l8 7M703 583l8-8M737 583l8-8M1115 583l8-8"/>
            </g>
            <path d="M1153 312L1119 380" stroke="#8a8f96" stroke-dasharray="3 2"/>
            <path d="M717.500 392V529M732.500 392V529M1110.500 383V433M708 402.500H717M708 422.500H717M708 519.500H741" stroke="#9cc4ee" stroke-dasharray="4 3"/>
            <g stroke="#7fbf6b">
              <path d="M706 378.500L1119 368.500M706.500 374V384M703 382l7-8M1119.500 364V374M1115 373l8-8"/>
              <path d="M693.500 392V529M688 392.500h11M688 529.500h11M690 389l8 7M690 526l8 7"/>
              <path d="M755.500 433V529M750 433.500h11M750 529.500h11M752 430l7 7M752 526l7 7"/>
              <path d="M741 447.500H1119M741.500 442v10M738 451l7-8M1119.500 442v10M1116 451l7-8"/>
              <path d="M707 543.500H741M707.500 538v10M704 547l7-8M741.500 538v10M738 547l7-8"/>
              <path d="M1133.500 381V433M1127 381.500h11M1127 433.500h11M1129 378l8 7M1129 430l8 7"/>
            </g>
            <path d="M707 392H745L1119 381V433H741V529H707Z" stroke="#f4f4f4" stroke-width="2"/>
            <path d="M732.500 394v3M732 396.500L842 393.500v-2M1119 383.500H1221.500V338M1221 338.500h2M1119 413.500H1171M1170 415l3-3" stroke="#fff"/>
            <path d="M718 402.500H742L1119 392.500H1228L1230.500 389V338" stroke="#cb161c" stroke-width="5"/>
            <path d="M717.500 402V422.500H1170" stroke="#cb161c" stroke-width="5" stroke-linejoin="bevel"/>
            <path d="M717.500 420V517L720 519.500H732" stroke="#cb161c" stroke-width="3"/>
            <path d="M719.500 404v3M784.500 402v3M849.500 401v3M914.500 399v3M979.500 398v3M1044.500 396v3M719.500 418v3M784.500 418v3M849.500 418v3M914.500 418v3M979.500 418v3M1044.500 418v3M719.500 460v3M719.500 516v3" stroke="#f1bb22"/>
            <path d="M785 392.500h5" stroke="#0f0" stroke-width="2"/>
            <g class="dims">
              <text x="904" y="369">1200</text><text x="922" y="457">1100</text><text x="680" y="463">400</text><text x="756" y="484">280</text><text x="718" y="553">100</text><text x="1133" y="410">150</text>
            </g>
            <text class="tiny" x="1147" y="412">150</text>
            <text class="tiny" transform="translate(1220 368) rotate(-90)">150</text>
            <g class="ghost">
              <text x="663" y="392">30</text><text x="656" y="417">120</text><text x="656" y="486">280</text><text x="714" y="569">100</text><text x="917" y="569">1100</text>
            </g>
            <text class="lead" x="1155" y="314">全部纵筋</text><text class="by" x="1217" y="314">按截面</text>
          </g></svg>
        </div>
        <div class="snap">
          <div class="snap-a"><button class="pressed pick"><svg class="ic"><use href="#i-ortho"/></svg>正交</button><button class="pressed pick"><svg class="ic"><use href="#i-dyn"/></svg>动态输入</button></div>
          <div class="bar snap-b"><button class="tool"><svg class="ic"><use href="#i-perp"/></svg>垂点</button><button class="tool"><svg class="ic"><use href="#i-mid"/></svg>中点</button></div>
        </div>
      </div>
      <div class="dlg-status"><span class="xy">(X: 657 Y: 602)</span><span class="hint">选择钢筋进行编辑，选择标注进行修改或移动;</span><svg width="12" height="12"><path d="M9 1h2M9 5h2M5 5h2M9 9h2M5 9h2M1 9h2" stroke="#aaa" stroke-width="2"/></svg></div>
    </div>
  </section>
</div>

<footer class="status">
  <span class="s1"></span><span class="s2">层高<span class="m">:4.5m</span></span><span class="s3">底标高<span class="m">:-0.03m</span></span><span class="s4 m">0</span><span class="s5">名称在当前层当前构件类型下不允许重名</span><span class="s6 m">639.4 FPS</span>
</footer>

<div class="taskbar">
  <button class="start" aria-label="开始"><svg width="16" height="16"><path d="M0 2.300L7 1.300V7.500H0zM8 1.200L16 0V7.500H8zM0 8.500H7V14.700L0 13.700zM8 8.500H16V16L8 14.800z" fill="#fff"/></svg></button>
  <label class="cortana"><svg width="22" height="22"><circle cx="11" cy="11" r="9" fill="none" stroke="#eee" stroke-width="3"/></svg><input type="text" placeholder="在这里输入你要搜索的内容" aria-label="搜索"><svg width="12" height="20"><path d="M3.500 1.500h5v11h-5zM1.500 9v6.500h9V9M6 16v3M3 19h6" fill="none" stroke="#aaa"/></svg></label>
  <div class="apps">
    <button class="far" aria-label="任务视图"><svg width="22" height="18"><path d="M5.500 2.500h11v13h-11zM3 4.500H1.500v9H3M19 4.500h1.500v9H19" fill="none" stroke="#fff" stroke-width="1.300"/></svg></button>
    <button class="far" aria-label="风扇"><svg width="22" height="26"><g fill="#e8e8e8" stroke="#222" stroke-width=".7"><path id="petal" d="M11 13c-5 1-10-1-10-5 0-3 2-6 5-6 5 0 5 3 5 6z"/><use href="#petal" transform="rotate(90 11 13)"/><use href="#petal" transform="rotate(180 11 13)"/><use href="#petal" transform="rotate(270 11 13)"/></g></svg></button>
    <button class="far" aria-label="消息"><svg width="28" height="30"><path d="M17 9C12 5 3 8 2 16s8 11 13 7 3-11-2-10-4 8 0 7 3-4 2-5M4 11c-4 8 0 15 6 14" fill="none" stroke="#ddd" stroke-width="1.400"/><path d="M21 2c-4 0-4 4-4 8l-2 4h12l-2-4c0-4 0-8-4-8z" fill="#e5a30c"/><circle cx="21" cy="15" r="2" fill="#e5a30c"/></svg></button>
    <button aria-label="Edge"><svg width="24" height="26"><path d="M2 12C3 4 8 2 12 2c6 0 9 4 9 10v2H8c0 6 7 6 12 4v5c-8 4-17 1-16-7 0-4 3-7 6-8-2 1-3 2-3 4h9c0-6-9-6-14 0z" fill="#0f7bdc"/></svg></button>
    <button aria-label="应用商店"><svg width="24" height="28"><path d="M8 9c0-9 8-9 8 0" fill="none" stroke="#fff" stroke-width="1.500"/><path d="M1 8h22v18H1z" fill="#fff"/><path d="M6 11h5.500v5.500H6z" fill="#f0501e"/><path d="M12.500 11H18v5.500h-5.500z" fill="#7cb800"/><path d="M6 17.500h5.500V23H6z" fill="#08a4ee"/><path d="M12.500 17.500H18V23h-5.500z" fill="#fdb900"/></svg></button>
    <button aria-label="文件管理器"><svg width="22" height="24"><path d="M0 2h8l2 2h12v18H0z" fill="#f7d671"/><path d="M2 6h18v2H2z" fill="#fff3c0"/><path d="M4 23V13h14v10h-4v-5H8v5z" fill="#36b1e2"/></svg></button>
    <button aria-label="Internet Explorer"><svg width="24" height="24"><use href="#t-ie"/></svg></button>
    <button class="run" aria-label="浏览器"><svg width="24" height="26"><circle cx="12" cy="13" r="10.500" fill="#52b52e"/><path d="M7 13h10c0-8-11-7-11 0s9 7 11 3" fill="none" stroke="#fff" stroke-width="2.800"/><path d="M3 20C6 12 14 6 21 5" fill="none" stroke="#c8eea8" stroke-width="1.500"/></svg></button>
    <button class="run" aria-label="笔记"><svg width="24" height="26"><rect y="1" width="24" height="24" rx="2" fill="url(#go)"/><path d="M3 5l15-1 2 17-15 1z" fill="#fff7e0"/><path d="M6 9h8M6 12h8M7 15h7M7 18h6" stroke="#b84"/><path d="M21 4l-8 13-3 3 1-5 8-12z" fill="#8a3a18"/></svg></button>
    <button class="run active" aria-label="广联达"><svg width="24" height="24"><use href="#ggj"/></svg></button>
    <button class="run" aria-label="算量"><svg width="24" height="26"><path d="M20 3C10 1 2 5 2 14c0 8 8 12 15 9 5-3 6-9 5-12h-8c4 3 2 8-2 8-6 0-7-9-1-12 3-1 7-1 9-4z" fill="#1396f0"/></svg></button>
    <button class="run" aria-label="图库"><svg width="24" height="26"><rect y="1" width="24" height="24" rx="2" fill="#1977c4"/><path d="M4 7l6 1v14l-6-2zM11 8l6-1 4 3v11H11z" fill="#e5eef5"/><circle cx="15" cy="8" r="4" fill="#a9d9f5" stroke="#eee"/><path d="M18 11l4 5" stroke="#d08030" stroke-width="2"/></svg></button>
  </div>
  <div class="cpu">46%<br>CPU使用</div>
  <div class="tray">
    <svg width="14" height="10"><path d="M1 8l6-6 6 6" fill="none" stroke="#fff" stroke-width="1.400"/></svg>
    <svg width="17" height="16"><path d="M6 4.500h9.500v8H6M1.500 2v4c0 3 4 3 4 0V2M1 4.500h5M3.500 8v5.500H6" fill="none" stroke="#fff"/><path d="M7.500 6.500h6v4h-6z" fill="#fff"/></svg>
    <svg width="14" height="16"><path d="M1 15C1 8 6 3 13 2M4 15c0-5 4-9 9-10M7 15c0-3 3-6 6-7M10 15c0-2 1-3 3-4" fill="none" stroke="#ddd"/><circle cx="13" cy="15" r="1" fill="#fff"/></svg>
    <svg width="17" height="16"><path d="M1 6h3l4-4v12l-4-4H1zM10 5q2 3 0 6M12 3q4 5 0 10M14 1q5 7 0 14" fill="none" stroke="#eee"/></svg>
    <svg width="24" height="16"><path d="M.5 1.500h23v13H.500z" fill="none" stroke="#fff"/><path d="M3 5h18M3 8h18" stroke="#fff" stroke-width="1.500" stroke-dasharray="2 1"/><path d="M6 11.500h12" stroke="#fff"/></svg>
    <span class="zh">中</span>
    <svg width="16" height="18"><use href="#sogou"/></svg>
  </div>
  <div class="clock">16:38<br>2017/11/4</div>
  <button class="action" aria-label="操作中心"><svg width="28" height="32"><path d="M3 4h16v13h-3l-3 4v-4H3z" fill="#fff"/><path d="M6 8h10M6 11h10M6 14h6" stroke="#111"/><circle cx="19" cy="22" r="8" fill="#333" stroke="#999" stroke-width="1.500"/><text x="15" y="27" class="badge">2</text></svg></button>
</div>

<div class="ime">
  <svg class="ime-logo"><use href="#sogou"/></svg>
  <svg width="16" height="16"><path d="M2 4.500h12v6H2zM8 1v15" fill="none" stroke="#1d74c9" stroke-width="2"/></svg>
  <svg width="16" height="16"><circle cx="4" cy="4" r="1.800" fill="none" stroke="#1d74c9" stroke-width="1.400"/><path d="M9 8h3v4l-3 3 1-3H9z" fill="#1d74c9"/></svg>
  <svg width="16" height="16"><rect x="5" width="6" height="10" rx="3" fill="#1d74c9"/><path d="M2.500 7c0 7 11 7 11 0M8 12v3M5 15h6" fill="none" stroke="#1d74c9" stroke-width="1.500"/></svg>
  <svg width="16" height="16"><rect x=".7" y="2.700" width="14.600" height="11" fill="none" stroke="#1d74c9" stroke-width="1.400"/><path d="M3 6h10M3 8.500h10" stroke="#1d74c9" stroke-width="1.500" stroke-dasharray="2 1"/><path d="M4 11.500h8" stroke="#1d74c9"/></svg>
  <svg width="16" height="16"><circle cx="7" cy="4" r="3.500" fill="#b5bfd5"/><path d="M1 15c0-8 12-8 13 0z" fill="#b5bfd5"/><path d="M7 9h2v6M12 12v-3h2.500v6H12" fill="none" stroke="#fff" stroke-width="1.200"/></svg>
  <svg width="16" height="16"><path d="M5 1c1 2 5 2 6 0l4 3-2 4-1-1v8H4V7L3 8 1 4z" fill="#1d74c9"/></svg>
  <svg width="16" height="16"><path d="M1.500 14.500L9 7" stroke="#1d74c9" stroke-width="3"/><path d="M14.500 4L12 6 10 4l2-3c-5-1-6 4-4 6s7 2 6.500-3z" fill="#1d74c9"/></svg>
</div>
<div class="score">72</div>
<svg class="mark" aria-hidden="true"><ellipse cx="149" cy="54" rx="145" ry="50" fill="none" stroke="#f00" stroke-width="7"/></svg>
</body>
</html>
```
FILE: styles.css
```css
*{box-sizing:border-box}
body{margin:0;height:100vh;overflow:hidden;position:relative;display:flex;flex-direction:column;background:#f0f0f0;color:#000;font:12px/16px "Noto Sans","Noto Sans CJK SC",sans-serif}
button,select,input{font:inherit;color:inherit;border:0;background:none;padding:0;margin:0;border-radius:0}
button{display:flex;align-items:center;justify-content:center;white-space:nowrap}
svg{display:block;flex:none}
ul{list-style:none;margin:0;padding:0}
h1,h2{margin:0;font:inherit}
select{appearance:none}
.defs{position:absolute;width:0;height:0}
.ic{width:16px;height:16px}
.m{font-family:"DejaVu Sans Mono","Liberation Mono",monospace;font-size:10px}
.caret{width:6px;height:4px;margin:0 1px}
.caret.wide{margin:0 0 0 2px}
.off{color:#838383}
.sep{width:1px;height:22px;background:#bbb;flex:none}

/* title and menu */
.titlebar{height:23px;background:#fff;display:flex;align-items:center;gap:5px;padding:0 18px 0 2px;color:#999;flex:none}
.titlebar h1{flex:1;white-space:nowrap;overflow:hidden;font:13px/18px Roboto,"Noto Sans CJK SC",sans-serif}
.wincontrols{display:flex;gap:34px}
.menubar{height:31px;display:flex;align-items:center;gap:11px;padding-left:7px;flex:none;white-space:nowrap}
.tool{gap:4px}
.tool.tight{gap:2px}
.tool.tight .ic{margin-right:2px}
.tool.tight .caret{margin:0}
.helper{margin-right:-4px}
.notice{align-self:stretch;display:flex;align-items:center;justify-content:center;flex:1;color:#336600;background:#f6f6f6;border-left:1px solid #fff}
.account{display:flex;align-items:center;gap:10px;align-self:stretch;width:236px;background:#f6f6f6}
.account .tool{margin-right:1px}
.more{align-self:flex-start;margin:5px 4px 0 auto}
.more svg{width:9px;height:7px}

/* tool strips */
.bar{display:flex;align-items:center;gap:7px;background:linear-gradient(#fcfcfc,#ececec);white-space:nowrap}
.toolbars{display:flex;height:29px;gap:3px;flex:none}
.bar-file{width:150px;padding-left:4px}
.bar-draw{flex:0 1 547px;padding-left:4px}
.bar-view{flex:1;min-width:0;gap:6px}
.dimsel{display:flex;align-items:center;border:1px solid #777;height:23px;width:62px;padding:0 2px 0 3px;gap:2px;margin-left:1px}
.dimsel select{flex:1;min-width:0}

/* workspace */
.workspace{flex:1;min-height:0;display:flex;gap:6px;position:relative}
.nav{width:165px;display:flex;flex-direction:column;padding-top:1px}
.nav-head{height:15px;display:flex;align-items:center;border:1px solid #777;border-left:0;gap:8px;padding-right:4px;line-height:13px}
.nav-head span{flex:1}
.nav-tab{height:22px;border:1px solid #aaa;background:#f0f0f0;flex:none}
.nav-head+.nav-tab{margin-top:2px}
.nav-tools{display:flex;gap:6px;align-items:center;height:28px;background:linear-gradient(#fff,#eee);padding-left:6px;border:1px solid #ccc;flex:none}
.tree{flex:1;min-height:0;margin:0 1px 1px 2px;background:#fff;border:1px solid #828790;display:grid;grid-template-columns:1fr 15px;grid-template-rows:1fr 16px;padding:0 2px 1px 0}
.tree-list{overflow:hidden}
.tree-list li{height:16px;display:flex;align-items:center;white-space:nowrap}
.leaf{padding-left:42px;gap:4px;background:repeating-linear-gradient(to bottom,#888 0 1px,#0000 1px 2px) 30px 0/1px 100% no-repeat,repeating-linear-gradient(to right,#888 0 1px,#0000 1px 2px) 30px 8px/12px 1px no-repeat}
.leaf .m{margin-left:-4px}
.leaf.on{background:repeating-linear-gradient(to bottom,#888 0 1px,#0000 1px 2px) 11px 0/1px 100% no-repeat,repeating-linear-gradient(to bottom,#888 0 1px,#0000 1px 2px) 30px 0/1px 100% no-repeat,repeating-linear-gradient(to right,#888 0 1px,#0000 1px 2px) 30px 8px/12px 1px no-repeat}
.leaf.last{background-size:1px 50%,12px 1px}
.leaf.on.last{background-size:1px 100%,1px 50%,12px 1px}
.leaf.picked{background:linear-gradient(#d9d9d9,#d9d9d9) 40px 0/100% 100% no-repeat}
.leaf.picked .m{margin:0}
.book{margin-left:-3px}
.root{padding-left:6px;gap:6px}
.ch{width:10px;height:10px;color:#444}
.ch.dim{color:#aaa}
.fd{width:16px;height:12px;margin-right:-1px}
.vscroll{background:#f0f0f0;display:flex;flex-direction:column;align-items:center;justify-content:space-between;padding:4px 0;color:#555}
.vscroll svg,.hscroll svg{width:10px;height:10px}
.vscroll b{background:#cdcdcd;width:100%}
.thumb-nav{height:208px;margin:auto 0 4px}
.hscroll{background:#f0f0f0;display:flex;align-items:center;justify-content:space-between;padding:0 4px;color:#555}
.hscroll b{flex:1;height:15px;background:#cdcdcd;margin:0 8px 0 4px}

.main{flex:1;min-width:0;display:flex;flex-direction:column}
.bar-part{height:29px;padding-left:4px;flex:none}
.bar-part .sep{margin:0 -1px}
.floor{display:flex;align-items:center;gap:7px;margin-left:-3px}
.combo{display:flex;align-items:center;background:#fff;height:22px;width:60px;padding:0 2px}
.bar-part .combo{width:58px}
.combo select{flex:1;min-width:0}
.panes{flex:1;min-height:0;display:flex;gap:8px;padding-top:2px}
.parts{width:183px;display:flex;flex-direction:column;border-right:2px solid #999;background:#fff;margin-bottom:3px}
.search{display:flex;height:28px;border-bottom:2px solid #888;padding:2px 0 1px 1px}
.search input{flex:1;min-width:0;border:1px solid #777;padding:0 2px;margin-bottom:1px}
.search input::placeholder{color:#777;opacity:1}
.search button{width:24px;background:linear-gradient(#fff,#e8f2fa)}
.parts-body{flex:1;min-height:0;display:flex;border:1px solid #888;border-width:0 1px 1px}
.parts-body ul{flex:1;overflow:hidden;padding-top:2px}
.parts-body li{height:16px;display:flex;align-items:center;padding-left:44px;gap:7px;font:10px/16px "DejaVu Sans Mono",monospace;background:repeating-linear-gradient(to bottom,#888 0 1px,#0000 1px 2px) 31px 0/1px 100% no-repeat,repeating-linear-gradient(to right,#888 0 1px,#0000 1px 2px) 31px 8px/11px 1px no-repeat}
.parts-body li svg{width:12px;height:12px}
.parts-body li.current{padding-left:40px;background-size:1px 50%,9px 1px}
.hit{display:flex;align-items:center;gap:7px;background:#316ac5;padding:0 4px}
.thumb-parts{height:179px;margin:auto 0 4px}
.parts-body .vscroll{width:15px}

.props{flex:1;min-width:0;display:flex;flex-direction:column;background:#fff;margin-bottom:3px}
.props-tabs{height:19px;flex:none;display:flex;margin-top:-2px}
.props-tabs button{width:59px;border-right:1px solid #ccc;border-top:1px solid #ddd;height:20px}
.props-body{flex:1;min-height:0;display:flex;margin:6px 6px 0 0;border:1px solid #a0a0a0}
.props-body .vscroll{width:15px;border-left:1px solid #ddd}
.thumb-props{height:385px;margin:2px 0 auto}
table{flex:1;border-collapse:separate;border-spacing:0;table-layout:fixed;align-self:flex-start}
th{height:23px;font-weight:400;border-bottom:1px solid #aaa;background:linear-gradient(#fff,#ececec);padding:0}
th:nth-child(2){text-align:left;padding-left:71px}
td{height:19px;line-height:17px;padding:0;border-bottom:1px solid #c0c0c0}
th:first-child,td:first-child{width:22px;text-align:center;border-right:1px solid #bbb;background:linear-gradient(90deg,#fff,#ececec)}
td:first-child{font-size:11px}
th:nth-child(2),td:nth-child(2){width:190px}
td:nth-child(2){padding-left:20px;white-space:nowrap}
.sel td{background:#0078d7;color:#fff}
.sel td:first-child{background:#ffd58a;color:#606}
.blue td:nth-child(2){color:#00f}
.gray td:nth-child(2){color:#808080}
.group td button{display:inline-flex;vertical-align:middle;margin-right:5px}
.group td:nth-child(2){padding-left:2px}
.child td:nth-child(2){padding-left:30px;background:linear-gradient(#aaa,#aaa) 8px 0/1px 100% no-repeat,linear-gradient(#aaa,#aaa) 8px 9px/17px 1px no-repeat}
.child.end td:nth-child(2){background-size:1px 50%,17px 1px}

/* section editor window */
.dialog{position:absolute;left:509px;right:22px;top:49px;bottom:4px;border:1px solid #222;background:#b9d1ea;padding:0 5px 6px 6px;display:flex;flex-direction:column;box-shadow:inset -1px -1px #4cc4f0}
.dialog h2{height:30px;flex:none;background:linear-gradient(#99b4d1,#b9d1ea);line-height:37px;margin:0 -5px 0 -6px;padding-left:7px}
.dlg-body{flex:1;min-height:0;display:flex;flex-direction:column;background:#f0f0f0;border-left:1px solid #fff}
.dlg-tabs{display:flex;align-items:flex-end;height:21px;padding-left:1px;border-bottom:1px solid #ddd;flex:none}
.dlg-tabs button{width:41px;height:19px;border:1px solid #d0d0d0;border-bottom:0;padding-right:4px}
.dlg-tabs .active{width:45px;height:21px;background:#fff;margin-bottom:-1px;border-color:#ddd;padding-right:7px}
.dlg-content{flex:1;min-height:0;display:flex;flex-direction:column;align-items:flex-start;padding:3px 5px 2px 4px;border-top:2px solid #fff;border-bottom:1px solid #ccc}
.strip-a{width:527px;height:26px;flex:none;padding-left:7px;gap:4px}
.strip-a .sep,.strip-b .sep{height:16px;margin:0 0 0 3px}
.strip-a>.caret{margin:0 0 0 -1px}
.strip-a .combo{width:79px;padding-left:1px}
.del{margin-left:4px}
.strip-a .more{margin-right:34px}
.pressed{border:1px solid #0078d7;background:#e0eefa;height:23px;padding:0 4px}
.pick{gap:4px}
.strip-a .pick{gap:0;padding:0 3px 0 5px}
.strip-b{height:29px;flex:none;padding:0 5px 0 7px;gap:3px}
.strip-b .sep{margin-left:4px}
.strip-b span{margin-right:-2px}
.canvas{align-self:stretch;flex:1;min-height:0;border:2px solid #f00;background:#14171f;overflow:hidden}
.canvas svg{width:100%;height:100%}
.canvas text{font-family:"Noto Sans","Noto Sans CJK SC",sans-serif}
.dims text{font-size:7px;fill:#fff}
.canvas .tiny{font-size:5px;fill:#0d0}
.canvas .ghost text{font-family:"Liberation Mono",monospace;font-size:12px;fill:#343a45}
.canvas .lead{font-size:13px;fill:#c8c8c8}
.canvas .by{font-size:13px;fill:#0f0}
.snap{display:flex;gap:3px;padding:1px 0 0 2px;height:27px;flex:none}
.snap-a{display:flex}
.snap-a .pressed{height:24px;padding:0 2px 0 3px}
.snap-b{padding:0 6px 0 4px}
.dlg-status{height:25px;flex:none;display:flex;gap:3px;padding:4px 0 1px;align-items:stretch;background:#fff;position:relative}
.dlg-status span{background:#f6f6f6;border:1px solid #ddd;line-height:18px;padding:0 1px}
.dlg-status .xy{width:97px;padding-left:4px}
.hint{flex:1}
.dlg-status svg{position:absolute;right:2px;bottom:2px}

/* status line */
.status{height:22px;display:flex;gap:3px;padding:1px 1px 0 0;flex:none;background:#f8f8f8}
.status>span{border:1px solid #ddd;background:linear-gradient(#fcfcfc,#ececec);line-height:19px;padding-left:1px;white-space:nowrap}
.s1{width:147px}.s2{width:77px}.s3{width:97px}.s4{width:47px}.s5{flex:1}.s6{width:70px}

/* taskbar */
.taskbar{height:40px;display:flex;align-items:center;flex:none;background:#03080c;color:#fff}
.taskbar button{height:40px}
.start{width:48px;flex:none}
.cortana{width:343px;height:40px;background:#333;display:flex;align-items:center;gap:5px;padding:0 13px 0 8px;color:#999;flex:none}
.cortana input{flex:1;min-width:0;font-size:14px}
.cortana input::placeholder{color:#999;opacity:1}
.apps{display:flex}
.apps button{width:48px;padding:0;border-bottom:3px solid transparent;border-top:3px solid transparent}
.apps .far{width:50px}
.apps .far+.far+.far{width:53px}
.apps .run{border-bottom-color:#76b9ed;width:39px;margin:0 4px}
.apps .run.active{background:#33414a;border-top-color:#33414a;width:47px;margin:0}
.cpu,.clock{text-align:center;line-height:17px}
.cpu{width:66px;margin-left:14px}
.tray{display:flex;align-items:center;gap:9px;margin-left:10px}
.zh{font-size:13px}
.clock{margin-left:auto;width:66px;line-height:19px}
.action{width:57px}
.badge{font-size:13px;fill:#fff;font-weight:700}

/* floating items above the windows */
.ime{position:absolute;left:974px;top:3px;display:flex;align-items:center;gap:6px;height:24px;width:182px;background:#fff;border:1px solid #b6c6dc}
.ime-logo{width:28px;height:28px;margin:-2px -1px 0 -3px}
.score{position:absolute;left:1174px;top:-30px;width:48px;height:48px;border-radius:50%;background:linear-gradient(#6d7,#3fc45c);border:2px solid #d4ead8;box-shadow:0 1px 5px #777;color:#fff;text-align:center;padding-top:28px;line-height:14px;font-size:12px;font-weight:700}
.mark{position:absolute;left:455px;top:112px;width:298px;height:110px;pointer-events:none}
```
